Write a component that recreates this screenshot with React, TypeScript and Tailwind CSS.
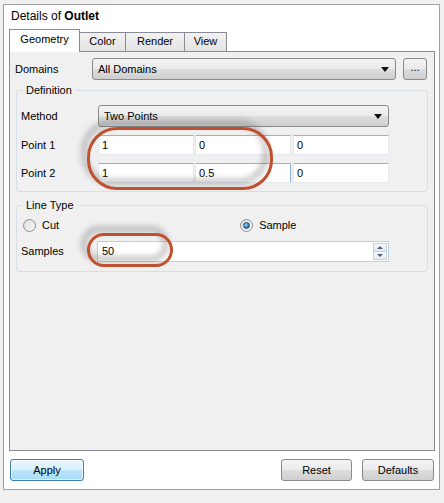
import React from "react";

const font = { fontFamily: '"Liberation Sans", Arial, sans-serif' };

const Arrow = () => (
  <svg width="8" height="5" viewBox="0 0 8 5" className="shrink-0">
    <path d="M0 0 H8 L4 5 Z" fill="#111" />
  </svg>
);

const Combo = ({ value, className }: { value: string; className: string }) => (
  <div
    className={`flex items-center justify-between rounded-[3px] border border-[#8a8a8a] bg-[linear-gradient(#f3f3f3_0%,#ebebeb_50%,#dddddd_51%,#cfcfcf_100%)] pl-[5px] pr-[6px] text-[11px] text-black ${className}`}
  >
    <span>{value}</span>
    <Arrow />
  </div>
);

const Field = ({ value, className = "" }: { value: string; className?: string }) => (
  <div
    className={`flex h-[20px] items-center border border-[#e3e9ef] border-t-[#abadb3] bg-white pl-[3px] text-[11px] text-black ${className}`}
  >
    {value}
  </div>
);

const Radio = ({ checked }: { checked?: boolean }) => (
  <div className="flex h-[13px] w-[13px] items-center justify-center rounded-full border border-[#8f8f8f] bg-[linear-gradient(135deg,#dcdcdc,#fbfbfb)]">
    {checked && (
      <div className="h-[7px] w-[7px] rounded-full border border-[#1c4f7a] bg-[radial-gradient(circle_at_35%_35%,#9fd4f5,#1f6fb0_70%)]" />
    )}
  </div>
);

// red hand-drawn marker with a soft grey shadow behind it
const Marker = ({ className }: { className: string }) => (
  <div className={`pointer-events-none absolute ${className}`}>
    <div className="absolute left-[-5px] top-[-6px] h-full w-full rounded-[30px] border-[4px] border-[#555]/50 blur-[3px]" />
    <div className="absolute inset-0 rounded-[30px] border-[3px] border-[#c0502f]" />
  </div>
);

const Button = ({ label, className }: { label: string; className: string }) => (
  <div
    className={`flex h-[22px] items-center justify-center rounded-[3px] border text-[11px] text-black ${className}`}
  >
    {label}
  </div>
);

const tabs = [
  { name: "Geometry", w: "w-[71px]" },
  { name: "Color", w: "w-[46px]" },
  { name: "Render", w: "w-[59px]" },
  { name: "View", w: "w-[42px]" },
];

export default function App() {
  return (
    <div className="relative h-[503px] w-[444px] overflow-hidden bg-[#f0f0f0] pl-[3px] pt-[4px]" style={font}>
      <div className="h-[486px] w-[437px] border border-[#a0a0a0] bg-white">
        <div className="flex h-[22px] items-center pl-[7px] text-[12px] text-black">
          Details of&nbsp;<b>Outlet</b>
        </div>

        {/* tab strip */}
        <div className="relative z-10 ml-[5px] mt-[2px] flex h-[22px] items-end">
          {tabs.map((t, i) =>
            i === 0 ? (
              <div
                key={t.name}
                className={`flex h-[23px] ${t.w} mb-[-1px] items-center justify-center border border-b-0 border-[#898c95] bg-white pb-[3px] text-[11px] text-black`}
              >
                {t.name}
              </div>
            ) : (
              <div
                key={t.name}
                className={`flex h-[19px] ${t.w} items-center justify-center border border-b-0 border-l-0 border-[#898c95] bg-[linear-gradient(#f2f2f2,#e3e3e3)] pb-[1px] text-[11px] text-black`}
              >
                {t.name}
              </div>
            )
          )}
        </div>

        {/* tab page */}
        <div className="ml-[5px] h-[400px] w-[426px] border border-[#898c95] bg-[#f0f0f0]">
          <div className="mt-[6px] flex h-[22px] items-center">
            <div className="w-[82px] pl-[5px] text-[11px] text-black">Domains</div>
            <Combo value="All Domains" className="h-[22px] w-[304px]" />
            <Button
              label="..."
              className="ml-[7px] h-[22px] w-[24px] border-[#8a8a8a] bg-[linear-gradient(#f3f3f3_0%,#ebebeb_50%,#dddddd_51%,#cfcfcf_100%)] pb-[4px]"
            />
          </div>

          <fieldset className="relative ml-[6px] mt-[3px] w-[412px] rounded-[3px] border border-[#d5dfe5] pb-[8px]">
            <legend className="ml-[6px] px-[3px] text-[11px] leading-[14px] text-black">Definition</legend>
            <div className="mt-[8px] flex items-center">
              <div className="w-[81px] pl-[4px] text-[11px] text-black">Method</div>
              <Combo value="Two Points" className="h-[22px] w-[291px]" />
            </div>
            <div className="mt-[8px] flex items-center">
              <div className="w-[81px] pl-[4px] text-[11px] text-black">Point 1</div>
              <Field value="1" className="w-[96px]" />
              <Field value="0" className="ml-[1px] w-[96px]" />
              <Field value="0" className="ml-[2px] w-[96px]" />
            </div>
            <div className="mt-[8px] flex items-center">
              <div className="w-[81px] pl-[4px] text-[11px] text-black">Point 2</div>
              <Field value="1" className="w-[96px]" />
              <Field value="0.5" className="ml-[1px] w-[96px] border-r-[#8fb5da]" />
              <Field value="0" className="ml-[2px] w-[96px]" />
            </div>
          </fieldset>

          <fieldset className="ml-[6px] mt-[6px] w-[412px] rounded-[3px] border border-[#d5dfe5] pb-[9px]">
            <legend className="ml-[6px] px-[3px] text-[11px] leading-[14px] text-black">Line Type</legend>
            <div className="mt-[5px] flex h-[16px] items-center">
              <div className="ml-[6px]">
                <Radio />
              </div>
              <span className="ml-[6px] text-[11px] text-black">Cut</span>
              <div className="ml-[181px]">
                <Radio checked />
              </div>
              <span className="ml-[6px] text-[11px] text-black">Sample</span>
            </div>
            <div className="mt-[8px] flex items-center">
              <div className="w-[80px] pl-[4px] text-[11px] text-black">Samples</div>
              <div className="flex h-[21px] w-[292px] items-center justify-between border border-[#b9cfe4] bg-white pl-[4px] pr-[1px] text-[11px] text-black">
                <span>50</span>
                <div className="flex h-[17px] w-[14px] flex-col">
                  <div className="flex flex-1 items-center justify-center border border-[#c7cfd8] bg-[linear-gradient(#f7f9fb,#e4e9ef)]">
                    <svg width="6" height="3" viewBox="0 0 6 3">
                      <path d="M0 3 L3 0 L6 3 Z" fill="#4d6185" />
                    </svg>
                  </div>
                  <div className="flex flex-1 items-center justify-center border border-t-0 border-[#c7cfd8] bg-[linear-gradient(#f7f9fb,#e4e9ef)]">
                    <svg width="6" height="3" viewBox="0 0 6 3">
                      <path d="M0 0 L6 0 L3 3 Z" fill="#4d6185" />
                    </svg>
                  </div>
                </div>
              </div>
            </div>
          </fieldset>
        </div>

        {/* bottom buttons */}
        <div className="mt-[8px] flex items-center pl-[6px] pr-[5px]">
          <Button
            label="Apply"
            className="w-[74px] border-[#3c7fb1] bg-[linear-gradient(#eaf6fd_0%,#d9f0fc_50%,#bee6fd_51%,#a7d9f5_100%)] shadow-[inset_0_0_0_1px_rgba(255,255,255,0.6)]"
          />
          <div className="flex-1" />
          <Button
            label="Reset"
            className="w-[71px] border-[#8a8a8a] bg-[linear-gradient(#f3f3f3_0%,#ebebeb_50%,#dddddd_51%,#cfcfcf_100%)]"
          />
          <Button
            label="Defaults"
            className="ml-[10px] w-[72px] border-[#8a8a8a] bg-[linear-gradient(#f3f3f3_0%,#ebebeb_50%,#dddddd_51%,#cfcfcf_100%)]"
          />
        </div>
      </div>

      <Marker className="left-[87px] top-[127px] h-[63px] w-[186px]" />
      <Marker className="left-[87px] top-[233px] h-[34px] w-[86px]" />
    </div>
  );
}
